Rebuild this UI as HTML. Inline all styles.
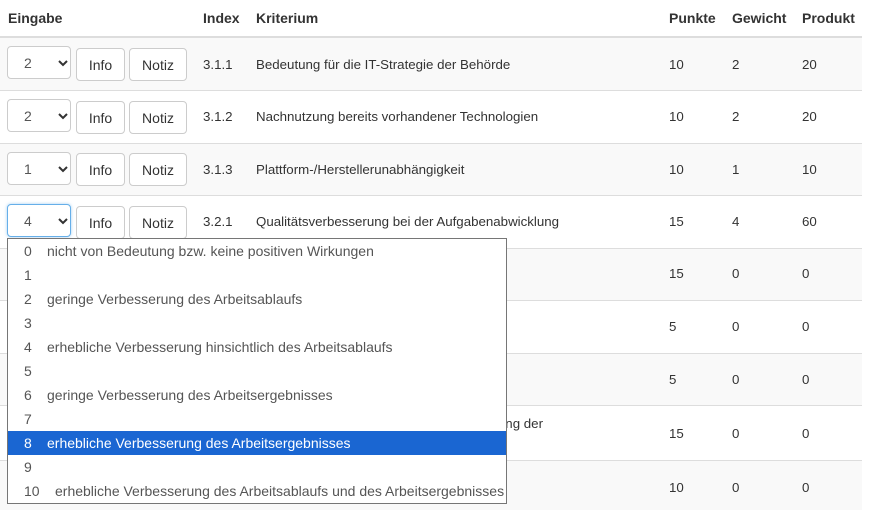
<!DOCTYPE html>
<html><head><style>
body{margin:0;width:874px;height:509px;overflow:hidden;background:#fff;font-family:"Liberation Sans",Arial,sans-serif;font-size:13.3px;color:#333;position:relative}
.a{position:absolute;white-space:nowrap}
.h{font-weight:bold;font-size:14px;top:10px}
.row{position:absolute;left:0;width:862px;border-top:1px solid #ddd}
.g{background:#f9f9f9}
.sel{position:absolute;left:7px;width:64px;height:33px;border:1px solid #ccc;border-radius:4px;background:#fff;box-sizing:border-box}
.sel span{position:absolute;left:16px;top:8px;font-size:14px;color:#555}
.sel svg{position:absolute;left:50px;top:13px}
.btn{position:absolute;height:33px;border:1px solid #ccc;border-radius:4px;background:#fff;box-sizing:border-box;text-align:center;line-height:32px;font-size:14px;color:#333}
.dd{position:absolute;left:7px;top:238px;width:500px;height:266px;border:1px solid #767676;background:#fff;box-sizing:border-box}
.it{position:absolute;left:0;width:498px;height:24px;line-height:24px;color:#555;font-size:14px}
.it b{font-weight:normal;position:absolute;left:16px}
.it i{font-style:normal;position:absolute;left:39px}
.hl{background:#1a66d2;color:#fff}
</style></head><body>
<div class="a h" style="left:8px">Eingabe</div>
<div class="a h" style="left:203px">Index</div>
<div class="a h" style="left:256px">Kriterium</div>
<div class="a h" style="left:669px">Punkte</div>
<div class="a h" style="left:732px">Gewicht</div>
<div class="a h" style="left:802px">Produkt</div>
<div class="row" style="top:36px;height:0;border-top:2px solid #ddd"></div>

<div class="row g" style="top:38px;height:52px;border-top:none"></div>
<div class="row" style="top:90px;height:52px"></div>
<div class="row g" style="top:143px;height:51px"></div>
<div class="row" style="top:195px;height:52px"></div>
<div class="row g" style="top:248px;height:51px"></div>
<div class="row" style="top:300px;height:52px"></div>
<div class="row g" style="top:353px;height:51px"></div>
<div class="row" style="top:405px;height:54px"></div>
<div class="row g" style="top:460px;height:49px"></div>

<div class="sel" style="top:46px"><span>2</span><svg width="10" height="7"><path d="M1 1l4 4 4-4" stroke="#333" stroke-width="2" fill="none"/></svg></div>
<div class="btn" style="left:76px;top:48px;width:49px">Info</div>
<div class="btn" style="left:129px;top:48px;width:58px">Notiz</div>
<div class="a" style="left:203px;top:57px">3.1.1</div>
<div class="a" style="left:256px;top:57px">Bedeutung für die IT-Strategie der Behörde</div>
<div class="a" style="left:669px;top:57px">10</div><div class="a" style="left:732px;top:57px">2</div><div class="a" style="left:802px;top:57px">20</div>

<div class="sel" style="top:99px"><span>2</span><svg width="10" height="7"><path d="M1 1l4 4 4-4" stroke="#333" stroke-width="2" fill="none"/></svg></div>
<div class="btn" style="left:76px;top:101px;width:49px">Info</div>
<div class="btn" style="left:129px;top:101px;width:58px">Notiz</div>
<div class="a" style="left:203px;top:109px">3.1.2</div>
<div class="a" style="left:256px;top:109px">Nachnutzung bereits vorhandener Technologien</div>
<div class="a" style="left:669px;top:109px">10</div><div class="a" style="left:732px;top:109px">2</div><div class="a" style="left:802px;top:109px">20</div>

<div class="sel" style="top:152px"><span>1</span><svg width="10" height="7"><path d="M1 1l4 4 4-4" stroke="#333" stroke-width="2" fill="none"/></svg></div>
<div class="btn" style="left:76px;top:153px;width:49px">Info</div>
<div class="btn" style="left:129px;top:153px;width:58px">Notiz</div>
<div class="a" style="left:203px;top:162px">3.1.3</div>
<div class="a" style="left:256px;top:162px">Plattform-/Herstellerunabhängigkeit</div>
<div class="a" style="left:669px;top:162px">10</div><div class="a" style="left:732px;top:162px">1</div><div class="a" style="left:802px;top:162px">10</div>

<div class="sel" style="top:204px;border-color:#66afe9;box-shadow:0 0 3px rgba(102,175,233,.6)"><span>4</span><svg width="10" height="7"><path d="M1 1l4 4 4-4" stroke="#333" stroke-width="2" fill="none"/></svg></div>
<div class="btn" style="left:76px;top:206px;width:49px">Info</div>
<div class="btn" style="left:129px;top:206px;width:58px">Notiz</div>
<div class="a" style="left:203px;top:214px">3.2.1</div>
<div class="a" style="left:256px;top:214px">Qualitätsverbesserung bei der Aufgabenabwicklung</div>
<div class="a" style="left:669px;top:214px">15</div><div class="a" style="left:732px;top:214px">4</div><div class="a" style="left:802px;top:214px">60</div>

<div class="a" style="left:669px;top:266px">15</div><div class="a" style="left:732px;top:266px">0</div><div class="a" style="left:802px;top:266px">0</div>
<div class="a" style="left:669px;top:319px">5</div><div class="a" style="left:732px;top:319px">0</div><div class="a" style="left:802px;top:319px">0</div>
<div class="a" style="left:669px;top:372px">5</div><div class="a" style="left:732px;top:372px">0</div><div class="a" style="left:802px;top:372px">0</div>
<div class="a" style="right:331px;top:416px">Verbesserung der</div>
<div class="a" style="left:669px;top:426px">15</div><div class="a" style="left:732px;top:426px">0</div><div class="a" style="left:802px;top:426px">0</div>
<div class="a" style="left:669px;top:480px">10</div><div class="a" style="left:732px;top:480px">0</div><div class="a" style="left:802px;top:480px">0</div>

<div class="dd">
<div class="it" style="top:0"><b>0</b><i>nicht von Bedeutung bzw. keine positiven Wirkungen</i></div>
<div class="it" style="top:24px"><b>1</b></div>
<div class="it" style="top:48px"><b>2</b><i>geringe Verbesserung des Arbeitsablaufs</i></div>
<div class="it" style="top:72px"><b>3</b></div>
<div class="it" style="top:96px"><b>4</b><i>erhebliche Verbesserung hinsichtlich des Arbeitsablaufs</i></div>
<div class="it" style="top:120px"><b>5</b></div>
<div class="it" style="top:144px"><b>6</b><i>geringe Verbesserung des Arbeitsergebnisses</i></div>
<div class="it" style="top:168px"><b>7</b></div>
<div class="it hl" style="top:192px"><b>8</b><i>erhebliche Verbesserung des Arbeitsergebnisses</i></div>
<div class="it" style="top:216px"><b>9</b></div>
<div class="it" style="top:240px"><b>10</b><i style="left:47px">erhebliche Verbesserung des Arbeitsablaufs und des Arbeitsergebnisses</i></div>
</div>
</body></html>
